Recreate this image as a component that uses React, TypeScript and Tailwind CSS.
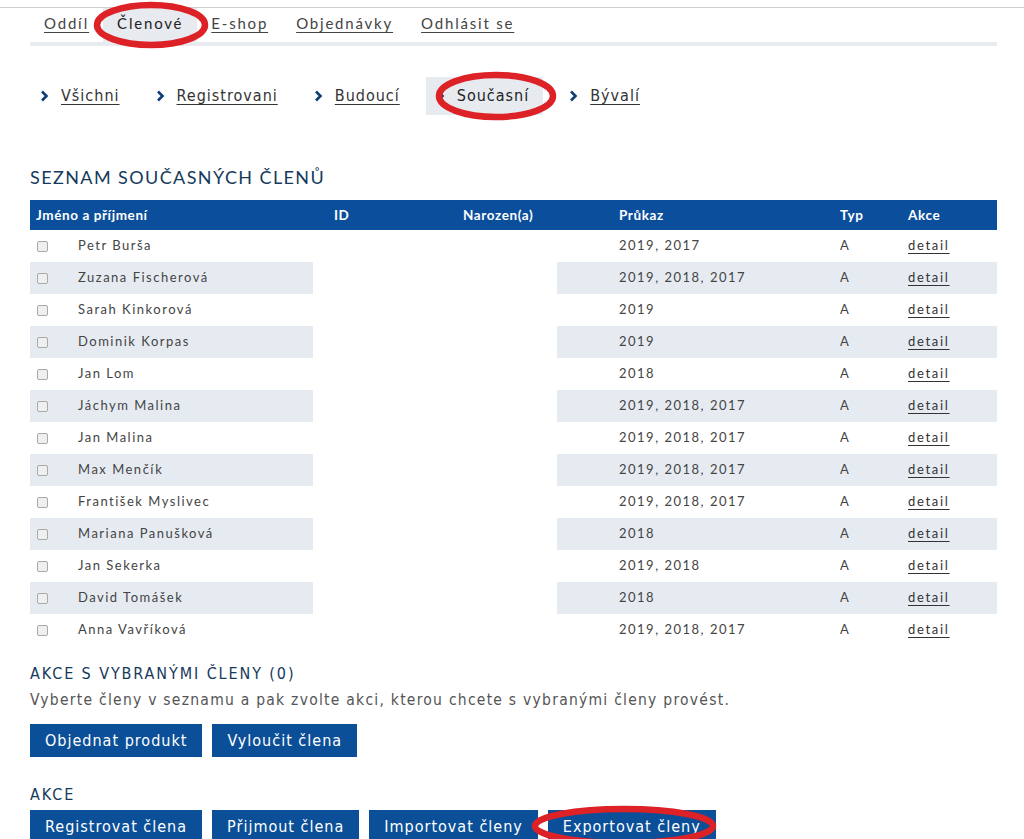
import React from "react";

const members: [string, string][] = [
  ["Petr Burša", "2019, 2017"],
  ["Zuzana Fischerová", "2019, 2018, 2017"],
  ["Sarah Kinkorová", "2019"],
  ["Dominik Korpas", "2019"],
  ["Jan Lom", "2018"],
  ["Jáchym Malina", "2019, 2018, 2017"],
  ["Jan Malina", "2019, 2018, 2017"],
  ["Max Menčík", "2019, 2018, 2017"],
  ["František Myslivec", "2019, 2018, 2017"],
  ["Mariana Panušková", "2018"],
  ["Jan Sekerka", "2019, 2018"],
  ["David Tomášek", "2018"],
  ["Anna Vavříková", "2019, 2018, 2017"],
];

const navFont = { fontFamily: "Lato, 'Open Sans', sans-serif" };
const condFont = { fontFamily: "'Liberation Sans Narrow', 'DejaVu Sans Condensed', Roboto, sans-serif" };

function Chevron() {
  return (
    <svg width="9" height="12" viewBox="0 0 9 12" className="shrink-0">
      <path d="M2 1.5 L6.5 6 L2 10.5" fill="none" stroke="#0d3f73" strokeWidth="2.6" />
    </svg>
  );
}

function Btn({ children }: { children: React.ReactNode }) {
  return (
    <button
      className="h-[33px] px-[15px] bg-[#0b4f98] text-white text-[16px] tracking-[1px] leading-none"
      style={condFont}
    >
      {children}
    </button>
  );
}

export default function App() {
  const navItems = ["Oddíl", "Členové", "E-shop", "Objednávky", "Odhlásit se"];
  const tabs = ["Všichni", "Registrovani", "Budoucí", "Současní", "Bývalí"];
  return (
    <div className="relative w-[1024px] h-[839px] overflow-hidden bg-white">
      <div className="h-[8px] border-b border-[#cfcfcf]" />
      <div className="ml-[30px] w-[967px]">
        {/* main nav */}
        <div className="flex h-[34px] items-stretch">
          {navItems.map((n) => (
            <div
              key={n}
              className={
                "flex items-start pt-[4px] px-[14px] text-[15px] tracking-[1.8px] " +
                (n === "Členové" ? "bg-[#e7ebf0] text-[#222]" : "text-[#444] underline underline-offset-[3px]")
              }
              style={navFont}
            >
              {n}
            </div>
          ))}
        </div>
        <div className="h-[4px] bg-[#e8ebef]" />

        {/* sub tabs */}
        <div className="flex gap-[16px] mt-[31px] h-[38px]">
          {tabs.map((t) => (
            <div
              key={t}
              className={"flex items-center gap-[12px] px-[10px] " + (t === "Současní" ? "bg-[#e7ebf0] pr-[14px]" : "")}
            >
              <Chevron />
              <span
                className={
                  "text-[16px] tracking-[1px] " +
                  (t === "Současní" ? "text-[#222]" : "text-[#333] underline underline-offset-[3px]")
                }
                style={condFont}
              >
                {t}
              </span>
            </div>
          ))}
        </div>

        {/* heading */}
        <h1
          className="mt-[51px] text-[18px] leading-[22px] tracking-[1.4px] text-[#163a5c] uppercase"
          style={navFont}
        >
          SEZNAM SOUČASNÝCH ČLENŮ
        </h1>

        {/* table */}
        <div className="mt-[12px]" style={navFont}>
          <div className="grid grid-cols-[283px_122px_122px_283px_68px_89px] h-[30px] bg-[#0b4f9c] text-white font-bold text-[13.5px] tracking-[0.6px] items-center">
            <div className="pl-[6px]">Jméno a příjmení</div>
            <div className="pl-[21px]">ID</div>
            <div className="pl-[28px]">Narozen(a)</div>
            <div className="pl-[62px]">Průkaz</div>
            <div>Typ</div>
            <div>Akce</div>
          </div>
          {members.map(([name, pr], i) => {
            const bg = i % 2 === 1 ? "bg-[#e6ebf2]" : "bg-white";
            return (
              <div
                key={name}
                className="grid grid-cols-[283px_122px_122px_283px_68px_89px] h-[32px] items-stretch text-[13px] tracking-[1.5px] text-[#444]"
              >
                <div className={"flex items-center " + bg}>
                  <span className="ml-[7px] w-[11px] h-[11px] border border-[#a9a9a9] bg-[#efefef] rounded-[2px]" />
                  <span className="ml-[30px]">{name}</span>
                </div>
                <div className="bg-white" />
                <div className="bg-white" />
                <div className={"flex items-center pl-[62px] " + bg}>{pr}</div>
                <div className={"flex items-center " + bg}>A</div>
                <div className={"flex items-center " + bg}>
                  <span className="underline underline-offset-[3px] text-[#333] tracking-[1.7px]">detail</span>
                </div>
              </div>
            );
          })}
        </div>

        {/* actions */}
        <h2
          className="mt-[18px] text-[16px] leading-[20px] tracking-[1.9px] text-[#163a5c] uppercase"
          style={condFont}
        >
          AKCE S VYBRANÝMI ČLENY (0)
        </h2>
        <p className="mt-[6px] text-[15.5px] leading-[20px] tracking-[1.25px] text-[#555]" style={condFont}>
          Vyberte členy v seznamu a pak zvolte akci, kterou chcete s vybranými členy provést.
        </p>
        <div className="flex gap-[10px] mt-[14px]">
          <Btn>Objednat produkt</Btn>
          <Btn>Vyloučit člena</Btn>
        </div>

        <h2
          className="mt-[28px] text-[16px] leading-[20px] tracking-[1.9px] text-[#163a5c] uppercase"
          style={condFont}
        >
          AKCE
        </h2>
        <div className="flex gap-[10px] mt-[5px]">
          <Btn>Registrovat člena</Btn>
          <Btn>Přijmout člena</Btn>
          <Btn>Importovat členy</Btn>
          <Btn>Exportovat členy</Btn>
        </div>
      </div>

      {/* red annotation ellipses */}
      <svg className="absolute inset-0 pointer-events-none" width="1024" height="839">
        <ellipse cx="151" cy="25" rx="54" ry="20" fill="none" stroke="#dc2227" strokeWidth="6.5" />
        <ellipse cx="496" cy="96" rx="57" ry="21" fill="none" stroke="#dc2227" strokeWidth="6.5" />
        <ellipse cx="624" cy="826" rx="89" ry="17" fill="none" stroke="#dc2227" strokeWidth="6.5" />
      </svg>
    </div>
  );
}
